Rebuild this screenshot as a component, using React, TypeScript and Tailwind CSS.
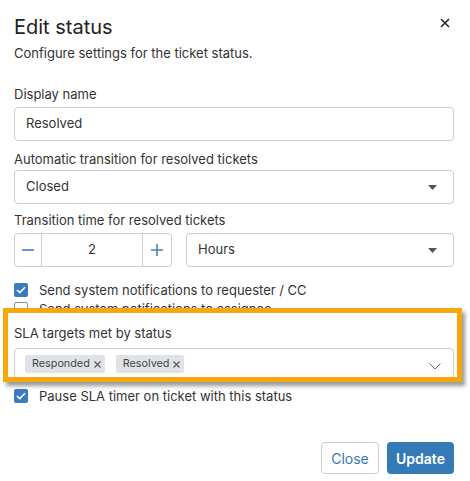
import React from "react";

function Caret() {
  return (
    <svg width="9" height="5" viewBox="0 0 9 5" className="shrink-0">
      <path d="M0 0 H9 L4.5 5 Z" fill="#555" />
    </svg>
  );
}

function Check({ checked }: { checked: boolean }) {
  if (checked) {
    return (
      <span className="w-[14px] h-[14px] rounded-[2px] bg-[#3b7bbf] flex items-center justify-center shrink-0">
        <svg width="10" height="8" viewBox="0 0 10 8">
          <path d="M1 4 L3.8 6.6 L9 1.2" fill="none" stroke="#fff" strokeWidth="1.6" />
        </svg>
      </span>
    );
  }
  return <span className="w-[14px] h-[14px] rounded-[2px] border border-[#8a8a8a] bg-white shrink-0" />;
}

function Chip({ label }: { label: string }) {
  return (
    <span className="h-[18px] flex items-center bg-[#dfe3e8] rounded-[2px] pl-[7px] pr-[4px] text-[10.8px] leading-[18px] text-[#444]">
      {label}
      <svg width="7" height="7" viewBox="0 0 7 7" className="ml-[4px]">
        <path d="M0.5 0.5 L6.5 6.5 M6.5 0.5 L0.5 6.5" stroke="#555" strokeWidth="1.1" />
      </svg>
    </span>
  );
}

export default function App() {
  return (
    <div
      className="w-[470px] h-[481px] bg-white pl-[14px] pr-[16px] text-[#333] overflow-hidden"
      style={{ fontFamily: "Inter, 'Noto Sans', sans-serif" }}
    >
      <div className="flex items-start justify-between pt-[15px]">
        <h2 className="text-[20px] leading-[24px] text-[#222] font-normal">Edit status</h2>
        <button className="mt-[3px] mr-[4px] w-[10px] h-[10px] flex items-center justify-center">
          <svg width="10" height="10" viewBox="0 0 10 10">
            <path d="M1 1 L9 9 M9 1 L1 9" stroke="#222" strokeWidth="1.5" />
          </svg>
        </button>
      </div>
      <p className="mt-[6px] text-[13px] leading-[16px]">Configure settings for the ticket status.</p>

      <div className="mt-[25px] text-[13px] leading-[16px]">Display name</div>
      <div className="mt-[5px] h-[34px] w-[440px] border border-[#ccc] rounded-[4px] flex items-center pl-[11px] text-[13px]">
        Resolved
      </div>

      <div className="mt-[10px] text-[13px] leading-[16px]">Automatic transition for resolved tickets</div>
      <div className="mt-[3px] h-[34px] w-[440px] border border-[#ccc] rounded-[4px] flex items-center justify-between pl-[11px] pr-[16px] text-[13px]">
        <span>Closed</span>
        <Caret />
      </div>

      <div className="mt-[8px] text-[13px] leading-[16px]">Transition time for resolved tickets</div>
      <div className="mt-[5px] flex w-[440px] gap-[14px]">
        <div className="h-[34px] w-[158px] border border-[#ccc] rounded-[4px] flex">
          <div className="w-[27px] border-r border-[#ccc] flex items-center justify-center">
            <svg width="12" height="2" viewBox="0 0 12 2">
              <path d="M0 1 H12" stroke="#4a7fba" strokeWidth="1.6" />
            </svg>
          </div>
          <div className="flex-1 flex items-center justify-center text-[13px]">2</div>
          <div className="w-[29px] border-l border-[#ccc] flex items-center justify-center">
            <svg width="12" height="12" viewBox="0 0 12 12">
              <path d="M0 6 H12 M6 0 V12" stroke="#4a7fba" strokeWidth="1.6" />
            </svg>
          </div>
        </div>
        <div className="h-[34px] flex-1 border border-[#ccc] rounded-[4px] flex items-center justify-between pl-[11px] pr-[16px] text-[13px]">
          <span>Hours</span>
          <Caret />
        </div>
      </div>

      <label className="mt-[15px] flex items-center gap-[11px] h-[16px] text-[13px] leading-[16px]">
        <Check checked />
        <span>Send system notifications to requester / CC</span>
      </label>
      <label className="mt-[3px] flex items-center gap-[11px] h-[16px] text-[13px] leading-[16px]">
        <Check checked={false} />
        <span>Send system notifications to assignee</span>
      </label>

      <div className="relative z-10 -mt-[9px] -ml-[11px] w-[459px] h-[74px] border-[5px] border-[#f6a70b] bg-white overflow-hidden shadow-[3px_4px_4px_rgba(0,0,0,0.4)] pl-[6px] pt-[12px]">
        <div className="text-[13px] leading-[16px]">SLA targets met by status</div>
        <div className="mt-[7px] h-[34px] w-[440px] border border-[#ccc] rounded-[4px] flex items-start justify-between pl-[10px] pr-[12px] pt-[6px]">
          <div className="flex gap-[11px]">
            <Chip label="Responded" />
            <Chip label="Resolved" />
          </div>
          <svg width="12" height="7" viewBox="0 0 12 7" className="mt-[8px]">
            <path d="M0.5 0.5 L6 6 L11.5 0.5" fill="none" stroke="#666" strokeWidth="1" />
          </svg>
        </div>
      </div>

      <label className="mt-[6px] flex items-center gap-[11px] h-[16px] text-[13px] leading-[16px]">
        <Check checked />
        <span>Pause SLA timer on ticket with this status</span>
      </label>

      <div className="mt-[38px] flex justify-end gap-[8px] w-[440px]">
        <button className="h-[32px] w-[58px] border border-[#ccc] rounded-[4px] text-[14px] text-[#337ab7] bg-white">
          Close
        </button>
        <button className="h-[32px] w-[67px] rounded-[4px] text-[14px] font-semibold text-white bg-[#337ab7]">
          Update
        </button>
      </div>
    </div>
  );
}
